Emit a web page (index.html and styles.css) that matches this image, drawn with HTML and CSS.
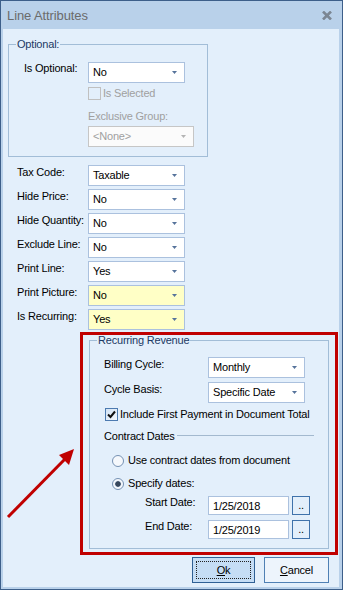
FILE: index.html
```html
<!DOCTYPE html>
<html lang="en">
<head>
    <meta charset="UTF-8">
    <meta name="viewport" content="width=device-width, initial-scale=1.0">
    <title>Line Attributes</title>
    <link rel="stylesheet" href="styles.css">
</head>
<body>
    <div class="window">
        <div class="titlebar">
            <span class="title">Line Attributes</span>
            <svg class="close" width="10" height="9" viewBox="0 0 10 9">
                <path d="M1 0.5 L9 8.5 M9 0.5 L1 8.5" stroke="#7b8693" stroke-width="2.6" fill="none"/>
            </svg>
        </div>

        <div class="content">
            <fieldset class="group optional">
                <legend>Optional:</legend>
                <div class="body">
                    <div class="row">
                        <span class="label">Is Optional:</span>
                        <div class="combo"><span>No</span></div>
                    </div>
                    <div class="check-row disabled indent">
                        <span class="checkbox"></span>
                        <span>Is Selected</span>
                    </div>
                    <div class="disabled indent caption">Exclusive Group:</div>
                    <div class="combo combo-wide disabled indent"><span>&lt;None&gt;</span></div>
                </div>
            </fieldset>

            <div class="rows">
                <div class="row">
                    <span class="label">Tax Code:</span>
                    <div class="combo"><span>Taxable</span></div>
                </div>
                <div class="row">
                    <span class="label">Hide Price:</span>
                    <div class="combo"><span>No</span></div>
                </div>
                <div class="row">
                    <span class="label">Hide Quantity:</span>
                    <div class="combo"><span>No</span></div>
                </div>
                <div class="row">
                    <span class="label">Exclude Line:</span>
                    <div class="combo"><span>No</span></div>
                </div>
                <div class="row">
                    <span class="label">Print Line:</span>
                    <div class="combo"><span>Yes</span></div>
                </div>
                <div class="row">
                    <span class="label">Print Picture:</span>
                    <div class="combo changed"><span>No</span></div>
                </div>
                <div class="row">
                    <span class="label">Is Recurring:</span>
                    <div class="combo changed"><span>Yes</span></div>
                </div>
            </div>

            <div class="highlight">
                <fieldset class="group recurring">
                    <legend>Recurring Revenue</legend>
                    <div class="body">
                        <div class="row">
                            <span class="label">Billing Cycle:</span>
                            <div class="combo"><span>Monthly</span></div>
                        </div>
                        <div class="row">
                            <span class="label">Cycle Basis:</span>
                            <div class="combo"><span>Specific Date</span></div>
                        </div>
                        <div class="check-row include">
                            <span class="checkbox checked">
                                <svg width="11" height="11" viewBox="0 0 11 11">
                                    <path d="M2 5.5 L4.5 8 L9 2.5" stroke="#111" stroke-width="2" fill="none"/>
                                </svg>
                            </span>
                            <span>Include First Payment in Document Total</span>
                        </div>
                        <div class="section">
                            <span>Contract Dates</span>
                            <span class="rule"></span>
                        </div>
                        <div class="radio-row first">
                            <span class="radio"></span>
                            <span>Use contract dates from document</span>
                        </div>
                        <div class="radio-row">
                            <span class="radio selected"></span>
                            <span>Specify dates:</span>
                        </div>
                        <div class="date-row">
                            <span class="date-label">Start Date:</span>
                            <div class="date-box">1/25/2018</div>
                            <div class="pick">..</div>
                        </div>
                        <div class="date-row">
                            <span class="date-label">End Date:</span>
                            <div class="date-box">1/25/2019</div>
                            <div class="pick">..</div>
                        </div>
                    </div>
                </fieldset>
            </div>

            <div class="buttons">
                <div class="btn btn-default"><span class="focus"><u>O</u>k</span></div>
                <div class="btn btn-cancel"><span><u>C</u>ancel</span></div>
            </div>

            <svg class="arrow" width="74" height="76" viewBox="0 0 74 76">
                <line x1="2" y1="73" x2="59" y2="15" stroke="#c00000" stroke-width="3"/>
                <polygon points="68,5 53,11 63,21" fill="#c00000"/>
            </svg>
        </div>
    </div>
</body>
</html>
```

FILE: styles.css
```css
* {
    box-sizing: border-box;
}

body {
    margin: 0;
    font-family: "Liberation Sans", Arial, sans-serif;
    font-size: 11px;
    line-height: 13px;
    letter-spacing: -0.2px;
    color: #000;
    background: #e3effb;
}

.window {
    width: 343px;
    height: 590px;
    border: 1px solid #3d5f8a;
    background: #b9d1ea;
    display: flex;
    flex-direction: column;
}

.titlebar {
    height: 28px;
    flex: none;
    display: flex;
    align-items: flex-start;
    justify-content: space-between;
    padding: 7px 10px 0 6px;
}

.title {
    font-size: 13px;
    line-height: 16px;
    letter-spacing: -0.1px;
    color: #6b6b6b;
}

.close {
    margin-top: 3px;
}

.content {
    flex: 1;
    margin: 0 3px 2px 2px;
    padding: 9px 0 0 5px;
    background: #e3effb;
    position: relative;
}

/* group boxes */
.group {
    margin: 0;
    padding: 0;
    min-width: 0;
    border: 1px solid #a2bdd7;
}

.group legend {
    margin-left: 7px;
    padding: 0 1px;
    color: #1c3a64;
    line-height: 13px;
}

.optional {
    width: 200px;
}

.optional .body {
    padding: 11px 0 9px 15px;
}

.recurring legend {
    line-height: 11px;
}

.recurring .body {
    padding: 11px 14px 9px 14px;
}

/* label + combo rows */
.row {
    display: flex;
    align-items: flex-start;
}

.label {
    width: 64px;
    flex: none;
}

.rows {
    margin-top: 8px;
    padding-left: 9px;
    display: flex;
    flex-direction: column;
    gap: 3px;
}

.rows .label {
    width: 71px;
    margin-top: 1px;
}

.recurring .row + .row {
    margin-top: 4px;
}

.recurring .label {
    width: 104px;
    margin-top: 1px;
}

.combo {
    width: 97px;
    height: 21px;
    flex: none;
    display: flex;
    align-items: center;
    justify-content: space-between;
    padding: 0 7px 0 4px;
    background: #fff;
    border: 1px solid #abc1de;
}

.combo::after {
    content: "";
    width: 5px;
    height: 3px;
    background: #56739b;
    clip-path: polygon(0 0, 100% 0, 50% 100%);
}

.combo.changed {
    background: #ffffc6;
}

.combo-wide {
    width: 106px;
    margin-top: 3px;
}

.indent {
    margin-left: 64px;
}

.disabled {
    color: #a0a0a0;
}

.combo.disabled {
    background: #fbfbfb;
    border-color: #c6c6c6;
}

.combo.disabled::after {
    background: #b4b4b4;
}

.caption {
    margin-top: 10px;
}

/* checkboxes */
.check-row {
    display: flex;
    align-items: center;
    gap: 2px;
    height: 13px;
    margin-top: 4px;
}

.checkbox {
    width: 13px;
    height: 13px;
    flex: none;
    border: 1px solid #c0c0c0;
    display: flex;
    align-items: center;
    justify-content: center;
}

.checkbox.checked {
    border-color: #4c7ab0;
    background: linear-gradient(135deg, #d2e3f5, #f4f8fd);
}

.include {
    margin-top: 5px;
    margin-left: 1px;
}

/* contract dates */
.section {
    display: flex;
    align-items: flex-start;
    margin-top: 9px;
}

.rule {
    flex: 1;
    margin: 5px 0 0 2px;
    border-top: 1px solid #a3b9cf;
}

.radio-row {
    display: flex;
    align-items: center;
    gap: 4px;
    height: 13px;
    margin-top: 10px;
    padding-left: 8px;
}

.radio-row.first {
    margin-top: 11px;
}

.radio {
    width: 12px;
    height: 12px;
    flex: none;
    border-radius: 50%;
    border: 1px solid #7591b3;
    background: #f5f8fc;
}

.radio.selected {
    background: radial-gradient(circle, #37475c 0, #37475c 2.4px, #b9c8d9 3px, #f5f8fc 3.6px);
}

.date-row {
    display: flex;
    align-items: flex-start;
    margin-top: 5px;
    padding-left: 41px;
}

.radio-row + .date-row {
    margin-top: 6px;
}

.date-label {
    width: 63px;
    flex: none;
}

.date-box {
    width: 81px;
    height: 19px;
    padding: 3px 0 0 4px;
    background: #fff;
    border: 1px solid #abc1de;
}

.pick {
    width: 18px;
    height: 19px;
    margin-left: 3px;
    border: 1px solid #3f72ab;
    display: flex;
    align-items: center;
    justify-content: center;
}

/* red annotation box */
.highlight {
    width: 258px;
    margin: 2px 0 0 72px;
    padding: 0 6px 3px 6px;
    border: 3px solid #c00000;
}

.arrow {
    position: absolute;
    left: 3px;
    top: 415px;
}

/* dialog buttons */
.buttons {
    display: flex;
    justify-content: flex-end;
    gap: 9px;
    margin-top: 2px;
    padding-right: 10px;
}

.btn {
    height: 26px;
    display: flex;
    align-items: center;
    justify-content: center;
    padding: 3px;
}

.btn-default {
    width: 63px;
    background: #c5ddf5;
    border: 1px solid #2f6095;
}

.btn-default .focus {
    width: 100%;
    height: 100%;
    display: flex;
    align-items: center;
    justify-content: center;
    border: 1px dotted #222;
}

.btn-cancel {
    width: 65px;
    background: #edf4fc;
    border: 1px solid #4f80b4;
}
```
